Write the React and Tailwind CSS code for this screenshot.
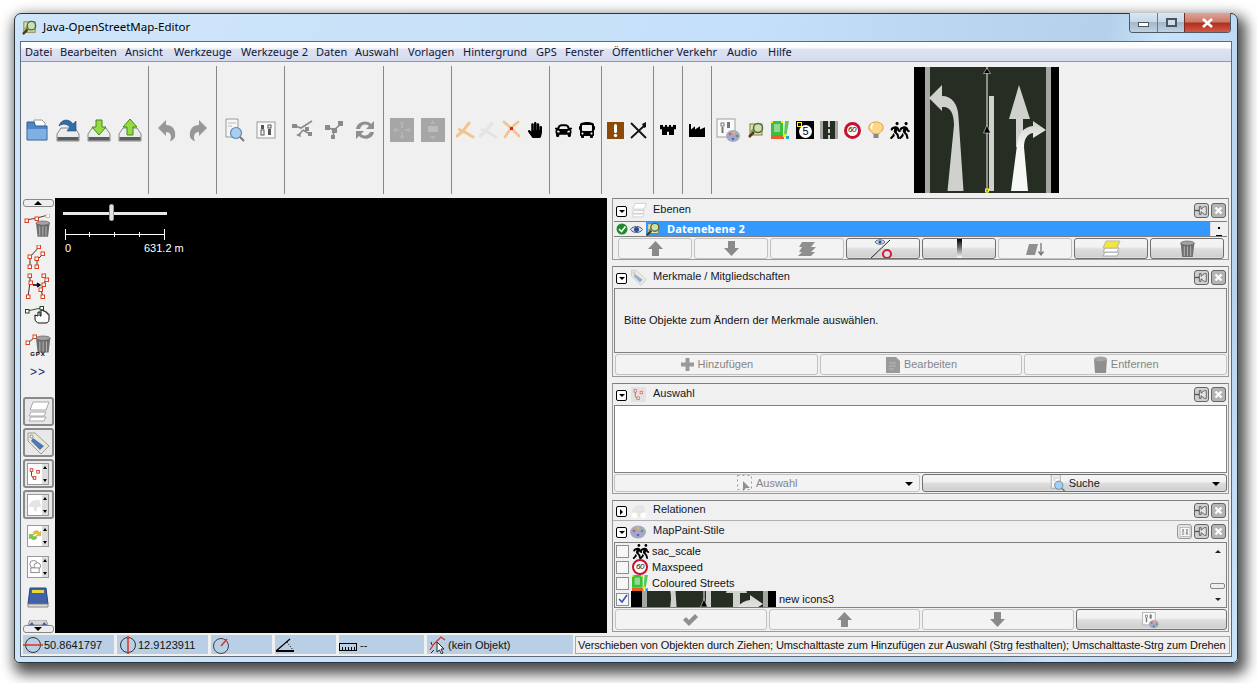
import React from "react";
import { FaCar, FaBus, FaHandPaper, FaWalking } from "react-icons/fa";

const Road = ({ w = 145, h = 126, vb = "0 0 145 126", id = "a" }) => (
  <svg width={w} height={h} viewBox={vb} preserveAspectRatio="none" className="block shrink-0">
    <defs>
      <linearGradient id={id} x1="0" y1="0" x2="0" y2="1">
        <stop offset="0" stopColor="#cfd1cd" />
        <stop offset="0.35" stopColor="#f7f7f5" />
      </linearGradient>
    </defs>
    <rect width="145" height="126" fill="#000" />
    <rect x="11" width="126" height="126" fill="#262d22" />
    <rect x="11" width="5" height="126" fill="#a5a8a2" />
    <rect x="132" width="5" height="126" fill="#a5a8a2" />
    <rect x="72" width="2" height="126" fill="#8c8f88" />
    <rect x="75" y="29" width="5" height="95" fill="#cfd1cd" />
    <path d="M15 31L28 18V29C38 29 44 37 44.5 50L49.5 124H33.5L40 58C40 46 36 39 28 40V44Z" fill="#cfd1cd" />
    <path d="M105 18L116 52H109V80H102V52H95Z" fill="#cfd1cd" />
    <path d="M97 124L103 78C104 66 110 60 119 59V54L132 63L119 71V66C113 67 110 72 110 80L114 124Z" fill={`url(#${id})`} />
    <path d="M73 1L76.5 6.5H69.5Z" fill="#000" stroke="#ddd" strokeWidth=".6" />
    <path d="M73 58L76.5 66H69.5Z" fill="#000" stroke="#ddd" strokeWidth=".6" />
    <rect x="71.5" y="122" width="3" height="3" fill="none" stroke="#ffff00" />
  </svg>
);

const S = ({ s = 22, v = 22, children }) => (
  <svg width={s} height={s} viewBox={`0 0 ${v} ${v}`} className="block shrink-0">{children}</svg>
);

const Drive = ({ children }) => (
  <S s={24} v={24}>
    <path d="M5 10H19L23 16V23H1V16Z" fill="#ececec" stroke="#8a8a8a" />
    <rect x="1.5" y="19" width="21" height="3.500" fill="#5a5d5f" />
    {children}
  </S>
);
const IOpen = () => (
  <S s={24} v={24}>
    <path d="M9 2H17L20 5V14H9Z" fill="#fff" stroke="#999" />
    <path d="M2 4H9L10.500 8H22V22H2Z" fill="#4f86c8" stroke="#2c5c96" />
    <path d="M2.500 11H21.500V21.500H2.500Z" fill="#7fb0e4" />
  </S>
);
const ISave = () => (
  <Drive>
    <path d="M3 8C5 1 13 0 17 6L20 3V13H11L14 9C11 6 7 5 3 8Z" fill="#2f6fa9" stroke="#1c4a78" strokeWidth=".6" />
  </Drive>
);
const IDown = () => (
  <Drive><path d="M9 2H15V9H19L12 17L5 9H9Z" fill="#98da44" stroke="#3f8a14" /></Drive>
);
const IUp = () => (
  <Drive><path d="M9 17H15V9H19L12 1L5 9H9Z" fill="#98da44" stroke="#3f8a14" /></Drive>
);
const IUndo = ({ flip }) => (
  <S s={24} v={24}>
    <g transform={flip ? "translate(24 0) scale(-1 1)" : undefined}>
      <path d="M3 10L11 2V7C18 7 21 12 20 19C19 21 17 23 15 23C17 19 16 14 11 14V18Z" fill="#979797" />
    </g>
  </S>
);
const ISearch = ({ s = 24 }) => (
  <S s={s} v={24}>
    <path d="M3 1H15V19H3Z" fill="#f6f6f6" stroke="#9a9a9a" />
    <path d="M5 5H13M5 8H9" stroke="#bbb" />
    <circle cx="13" cy="15" r="5.500" fill="#a9cdf0" stroke="#5e87ad" strokeWidth="1.200" />
    <path d="M17 19L21 23" stroke="#777" strokeWidth="2" />
  </S>
);
const IPrefs = ({ s = 22, c = "#555" }) => (
  <S s={s} v={22}>
    <rect x="2" y="3" width="18" height="16" fill="#fafafa" stroke="#9a9a9a" />
    <rect x="6" y="6" width="3" height="4" fill={c} />
    <rect x="6" y="11" width="3" height="5" fill="none" stroke={c} />
    <rect x="13" y="6" width="3" height="3" fill="none" stroke={c} />
    <rect x="13" y="10" width="3" height="6" fill={c} />
  </S>
);
const ISplit = () => (
  <S s={24} v={24}>
    <path d="M2 7L10 10L21 3M12 12L7 18M12 12L17 15" stroke="#8a8a8a" strokeWidth="1.600" fill="none" />
    <path d="M1 6H6V10H1ZM14 9H18V13H14ZM17 14H21V18H17ZM5 17L9 15L10 19Z" fill="#8a8a8a" />
  </S>
);
const ICombine = () => (
  <S s={24} v={24}>
    <path d="M5 9L12 12L20 5M12 12L11 19" stroke="#8a8a8a" strokeWidth="1.600" fill="none" />
    <path d="M3 7H8V12H3ZM10 10H15V15H10ZM9 17H13V21H9ZM16 3H21V8H16Z" fill="#8a8a8a" />
  </S>
);
const IRefresh = () => (
  <S s={24} v={24}>
    <path d="M3 11C4 4 13 1 18 6L21 3V11H13L16 8C12 5 8 7 7 11Z" fill="#8f8f8f" />
    <path d="M21 14C20 21 11 23 6 18L3 21V13H11L8 16C12 19 16 17 17 14Z" fill="#8f8f8f" />
  </S>
);
const IMove = () => (
  <S s={24} v={24}>
    <rect width="24" height="24" fill="#a6a6a6" />
    <path d="M12 3L15 6H13V10H11V6H9ZM12 21L9 18H11V14H13V18H15ZM3 12L6 9V11H9V13H6V15ZM21 12L18 15V13H15V11H18V9Z" fill="#b4b4b4" />
  </S>
);
const IPrint = () => (
  <S s={24} v={24}>
    <rect width="24" height="24" fill="#a6a6a6" />
    <rect x="7" y="8" width="10" height="6" fill="#bcbcbc" />
    <path d="M12 2L15 6H9ZM12 22L9 18H15Z" fill="#b4b4b4" />
  </S>
);
const ICross = ({ o = 1, c = "#f2c590", dot }) => (
  <S s={20} v={20}>
    <g opacity={o}>
      <path d="M1 16L7 11M7 11L13 3M7 11L17 17" stroke={c} strokeWidth="3" fill="none" strokeLinecap="round" />
      <path d="M2 9L7 11" stroke={c} strokeWidth="2.500" />
    </g>
    {dot && <rect x="8" y="8" width="3" height="3" fill="#e8201c" />}
  </S>
);
const ICross2 = () => (
  <S s={20} v={20}>
    <path d="M2 2L9 8L16 2M9 8L3 17M9 8L17 16" stroke="#f2c590" strokeWidth="2.800" fill="none" strokeLinecap="round" />
    <rect x="8" y="7" width="3" height="3" fill="#e8201c" />
  </S>
);
const IWarn = () => (
  <S s={17} v={17}>
    <rect width="17" height="17" fill="#8b4a08" />
    <rect x="7" y="2" width="3" height="9" rx="1.500" fill="#fff" />
    <circle cx="8.500" cy="13.500" r="1.700" fill="#fff" />
  </S>
);
const IFood = () => (
  <S s={17} v={17}>
    <path d="M1 1L16 16M15 3L1 16" stroke="#111" strokeWidth="1.800" />
    <path d="M12 2L16 0L16 5L14 6Z" fill="#111" />
  </S>
);
const ICastle = () => (
  <svg width="16" height="10" viewBox="0 0 16 12" preserveAspectRatio="none" className="block">
    <path d="M0 0H3V2H5V0H7V2H9V0H11V2H13V0H16V5H14V12H9V8H7V12H2V5H0Z" fill="#000" />
  </svg>
);
const IFactory = () => (
  <svg width="16" height="13" viewBox="0 0 16 12" preserveAspectRatio="none" className="block">
    <path d="M0 0H2V5L6 2V5L11 2V5L16 3V12H0Z" fill="#000" />
  </svg>
);
const IPalette = ({ s = 26 }) => (
  <S s={s} v={26}>
    <rect x="1" y="2" width="18" height="18" fill="#fafafa" stroke="#a0a0a0" />
    <rect x="5" y="6" width="3" height="3" fill="none" stroke="#777" />
    <rect x="5.500" y="10" width="2" height="6" fill="#777" />
    <rect x="11" y="5" width="3" height="6" fill="#777" />
    <ellipse cx="17" cy="19" rx="7" ry="6" fill="#a7a7c9" />
    <circle cx="14" cy="17" r="1.300" fill="#d9534f" />
    <circle cx="18" cy="15.500" r="1.300" fill="#e0c040" />
    <circle cx="21" cy="19" r="1.300" fill="#5aa050" />
    <circle cx="17" cy="22" r="1.300" fill="#4a70c8" />
  </S>
);
const ILogo = ({ s = 17 }) => (
  <S s={s} v={17}>
    <rect x="2" y="2" width="12" height="11" fill="#dfe4b0" stroke="#8a7c3a" />
    <path d="M3 10L8 5L13 3" stroke="#7ea85a" strokeWidth="2" fill="none" />
    <circle cx="10" cy="6" r="4.500" fill="#c9e0b0" stroke="#55663a" strokeWidth="1.500" />
    <path d="M6 10L1 15" stroke="#4a3a20" strokeWidth="2.500" />
  </S>
);
const IStreets = ({ s = 18, h = 18 }) => (
  <svg width={s} height={h} viewBox="0 0 18 18" className="block shrink-0">
    <rect width="18" height="18" fill="#f0f0f0" />
    <rect x="0" y="0" width="12" height="14" fill="#37c337" />
    <rect x="3" y="3" width="6" height="8" fill="#97d597" />
    <rect x="0" y="0" width="2" height="2" fill="#f0f000" />
    <rect x="10" y="0" width="2" height="2" fill="#f0f000" />
    <path d="M14 0H18L15.500 14H13Z" fill="#5cc85c" />
    <rect x="0" y="14" width="13" height="4" fill="#e8602c" />
    <rect x="12" y="13" width="3" height="3" fill="#f0f000" />
    <rect x="15" y="15" width="3" height="3" fill="#20a0e0" />
  </svg>
);
const IFive = () => (
  <div className="relative w-[18px] h-[18px] bg-black flex items-center justify-center">
    <div className="w-[13px] h-[13px] mt-[2px] ml-[2px] rounded-full bg-white text-black text-[11px] leading-[13px] text-center">5</div>
    <div className="absolute left-[1px] top-[1px] w-[5px] h-[5px] border border-[#ffff00]" />
  </div>
);
const ILanes = () => (
  <svg width="18" height="18" viewBox="0 0 18 18" className="block">
    <rect width="18" height="18" fill="#262d22" />
    <path d="M0 0H3V18H0ZM15 0H18V18H15Z" fill="#a5a8a2" />
    <path d="M8 0H10V6H8ZM8 8H10V12H8ZM8 14H10V18H8Z" fill="#cfd1cd" />
  </svg>
);
const ISixty = ({ s = 17 }) => (
  <div className={s === 17 ? "w-[17px] h-[17px] rounded-full border-[3px] border-[#c8102e] bg-white flex items-center justify-center text-[8px] leading-none text-black italic tracking-[-0.5px]" : "w-[16px] h-[16px] rounded-full border-[2px] border-[#c8102e] bg-white flex items-center justify-center text-[8px] leading-none text-black italic tracking-[-0.5px]"}>60</div>
);
const ILamp = () => (
  <S s={18} v={18}>
    <path d="M9 1C4 1 1 4 2 8C3 11 6 11 6 13H12C12 11 15 11 16 8C17 4 14 1 9 1Z" fill="#fcd68a" stroke="#e0a030" />
    <path d="M6 3C4 4 4 6 5 8" stroke="#fff" strokeWidth="1.500" fill="none" />
    <rect x="6.500" y="13" width="5" height="4" fill="#888" />
  </S>
);
const IHikers = ({ s = 17 }) => (
  <div className="flex items-center">
    <FaWalking size={s} color="#000" />
    <FaWalking size={s} color="#000" className="-ml-[8px]" />
  </div>
);

const Nd = ({ x, y, c = "#e0401c", r = 3.500 }) => <rect x={x} y={y} width={r} height={r} fill="#fff" stroke={c} strokeWidth="1" />;
const Trash = ({ x = 0, y = 0, s = 1, c = "#6f6f6f" }) => (
  <g transform={`translate(${x} ${y}) scale(${s})`}>
    <path d="M0 2H13L11.500 15H1.500Z" fill={c} />
    <path d="M3.500 5V14M6.500 5V14M9.500 5V14" stroke="#b0b0b0" />
    <ellipse cx="6.500" cy="2" rx="6.500" ry="2" fill="#a4a4a4" stroke="#555" strokeWidth=".6" />
  </g>
);
const TDel = () => (
  <svg width="28" height="24" viewBox="0 0 28 24" className="block">
    <path d="M2 6L13 4L24 1" stroke="#444" fill="none" />
    <Nd x="1" y="5" /><Nd x="11" y="3" /><Nd x="22" y="0" c="#f0b0a0" />
    <Trash x="12" y="7" s="1.050" />
  </svg>
);
const TSplit = () => (
  <svg width="22" height="24" viewBox="0 0 22 24" className="block">
    <path d="M3 22V12L12 2M10 22V15L16 9" stroke="#333" fill="none" />
    <Nd x="1" y="20" /><Nd x="1" y="10" /><Nd x="10" y="0" /><Nd x="8" y="20" /><Nd x="8" y="12" /><Nd x="14" y="7" />
  </svg>
);
const TMerge = () => (
  <svg width="24" height="27" viewBox="0 0 24 27" className="block">
    <path d="M4 2L4 9L2 24M18 2L20 6L18 11L15 17L17 24" stroke="#333" fill="none" />
    <path d="M7 12H13M11 10L14 12L11 14" stroke="#000" strokeWidth="1.400" fill="none" />
    <Nd x="2" y="1" /><Nd x="3" y="8" /><Nd x="0.500" y="22" /><Nd x="16" y="1" /><Nd x="19" y="5" /><Nd x="16" y="10" /><Nd x="13" y="15" /><Nd x="15" y="22" />
  </svg>
);
const THand = () => (
  <svg width="26" height="18" viewBox="0 0 26 18" className="block">
    <path d="M2 5L16 2" stroke="#444" />
    <Nd x="0.500" y="3.500" c="#1a4a1a" /><Nd x="15" y="0.500" c="#1a4a1a" />
    <path d="M13 6V10L10 9V13C10 15 12 17 14 17H21C23 17 24 15 24 13V8H22V6H20V5H18V4H16V10H15V6Z" fill="#fafafa" stroke="#111" />
  </svg>
);
const TGpx = () => (
  <div className="flex flex-col items-center -space-y-[3px]">
    <svg width="26" height="20" viewBox="0 0 26 20" className="block">
      <path d="M3 9L10 3" stroke="#333" />
      <Nd x="1" y="7" /><Nd x="8" y="1" />
      <Trash x="11" y="2" s="1.100" />
    </svg>
    <span className="text-[6px] leading-[7px] font-bold tracking-[1px] text-black">GPX</span>
  </div>
);
const Stack = ({ top = "#fff", line = "#a8a8a8", s = 24 }) => (
  <svg width={s} height={s} viewBox="0 0 24 24" className="block shrink-0">
    <path d="M5 17H20L22 13H7Z" fill="#fff" stroke={line} transform="translate(-2 4)" />
    <path d="M5 13H20L22 9H7Z" fill="#fff" stroke={line} transform="translate(-2 3)" />
    <path d="M4 10L7 2H23L20 10Z" fill={top} stroke={line} />
  </svg>
);
const Tag = ({ s = 24, o = 1 }) => (
  <svg width={s} height={s} viewBox="0 0 24 24" className="block shrink-0" opacity={o}>
    <path d="M2 2L9 2L23 15L15 23L2 10Z" fill="#e8e8d8" stroke="#a0a090" />
    <circle cx="5.500" cy="5.500" r="1.500" fill="#fff" stroke="#888" />
    <path d="M7 7L18 15L14 19L5 10Z" fill="#4f77b5" />
  </svg>
);
const Panelette = ({ children }) => (
  <div className="flex items-stretch w-[22px] h-[22px] bg-white border border-[#999]">
    <div className="flex-1 flex items-center justify-center overflow-hidden">{children}</div>
    <div className="w-[6px] bg-[#ddd] flex flex-col justify-between items-center">
      <div className="w-0 h-0 mt-[2px] border-x-[2px] border-x-transparent border-b-[3px] border-b-black" />
      <div className="w-0 h-0 mb-[2px] border-x-[2px] border-x-transparent border-t-[3px] border-t-black" />
    </div>
  </div>
);
const SelGlyph = ({ s = 16, o = 1 }) => (
  <svg width={s} height={s} viewBox="0 0 16 16" className="block" opacity={o}>
    <path d="M4 3V10L7 14" stroke="#333" fill="none" />
    <rect x="2.500" y="2" width="3" height="3" fill="#fff" stroke="#d83010" />
    <rect x="10" y="4" width="3" height="3" fill="#fff" stroke="#d83010" />
    <rect x="6" y="11" width="3" height="3" fill="#fff" stroke="#d83010" />
  </svg>
);
const RelGlyph = ({ s = 16 }) => (
  <svg width={s} height={s} viewBox="0 0 16 16" className="block">
    <path d="M1 8L5 3L13 2L15 9L11 15H3Z" fill="#e4e4e4" />
    <circle cx="4" cy="13" r="3" fill="#fff" /><circle cx="13" cy="13" r="3" fill="#fff" />
  </svg>
);
const SyncGlyph = () => (
  <svg width="22" height="19" viewBox="0 0 22 19" className="block">
    <path d="M8 5C10 1 16 1 18 5L20 3V10H13L15 8C14 6 11 6 10 8Z" fill="#e8c430" stroke="#a08810" strokeWidth=".6" />
    <path d="M14 13C12 17 6 17 4 13L2 15V8H9L7 10C8 12 11 12 12 10Z" fill="#7ccc44" stroke="#3f8a14" strokeWidth=".6" />
  </svg>
);

const Sep = () => (
  <div className="w-[6px] pl-[3px] self-stretch py-[4px] shrink-0"><div className="w-px h-full bg-[#888]" /></div>
);
const B = ({ children }) => <div className="w-[31px] shrink-0 flex items-center justify-center">{children}</div>;
const N = ({ children }) => <div className="w-[23px] shrink-0 flex items-center justify-center">{children}</div>;

const menus = [
  ["Datei", "w-[35px]"], ["Bearbeiten", "w-[65px]"], ["Ansicht", "w-[49px]"], ["Werkzeuge", "w-[67px]"],
  ["Werkzeuge 2", "w-[75px]"], ["Daten", "w-[39px]"], ["Auswahl", "w-[53px]"], ["Vorlagen", "w-[55px]"],
  ["Hintergrund", "w-[73px]"], ["GPS", "w-[29px]"], ["Fenster", "w-[47px]"], ["Öffentlicher Verkehr", "w-[115px]"],
  ["Audio", "w-[41px]"], ["Hilfe", "w-[30px]"],
];

const Tog = ({ open = true }) => (
  <div className="w-[11px] h-[11px] mt-[2px] rounded-[2px] border border-black bg-white flex items-center justify-center shrink-0">
    {open
      ? <div className="w-0 h-0 border-x-[3px] border-x-transparent border-t-[3px] border-t-black" />
      : <div className="w-0 h-0 border-y-[3px] border-y-transparent border-l-[3px] border-l-black" />}
  </div>
);
const Pin = () => (
  <div className="w-[15px] h-[15px] rounded-[3px] border border-[#666] bg-[#cfcfcf] flex items-center justify-center">
    <svg width="15" height="13" viewBox="0 0 15 13" className="block">
      <path d="M0 6.500H6" stroke="#555" strokeWidth="1.500" />
      <path d="M5 2H7V5L11 2H13V11H11L7 8V11H5Z" fill="#e4e4e4" stroke="#555" />
    </svg>
  </div>
);
const Cls = () => (
  <div className="w-[15px] h-[15px] rounded-[3px] border border-[#666] bg-[#b4b4b4] flex items-center justify-center">
    <svg width="9" height="9" viewBox="0 0 9 9" className="block"><path d="M1.500 1.500L7.500 7.500M7.500 1.500L1.500 7.500" stroke="#fff" strokeWidth="2.200" /></svg>
  </div>
);
const Head = ({ icon, title, open, h, extra }) => (
  <div className={`${h} flex items-center pl-[3px] pr-[2px] shrink-0`}>
    <Tog open={open} />
    <div className="w-[17px] h-[17px] ml-[3px] flex items-center justify-center shrink-0">{icon}</div>
    <span className="ml-[6px] mb-[3px] flex-1 text-[#101828]">{title}</span>
    {extra}
    <div className="flex gap-[2px]"><Pin /><Cls /></div>
  </div>
);
const on = "flex-1 flex items-center justify-center gap-[2px] rounded-[3px] border border-[#707070] bg-[linear-gradient(#f5f5f5_0%,#f1f1f1_42%,#dedede_52%,#d0d0d0_92%,#e4e4e4_100%)] text-[#101828] overflow-hidden";
const off = "flex-1 flex items-center justify-center gap-[2px] rounded-[3px] border border-[#c2c2c2] bg-[#f3f3f3] text-[#858585] overflow-hidden";

const Arrow = ({ up }) => (
  <svg width="17" height="17" viewBox="0 0 17 17" className="block">
    <path d={up ? "M8.500 1L16 9H12V16H5V9H1Z" : "M8.500 16L16 8H12V1H5V8H1Z"} fill="#8a8a8a" />
  </svg>
);

const Sec = ({ className, children }) => (
  <div className={`${className} shrink-0 flex flex-col border border-[#9a9a9a] border-t-[#7f7f7f] bg-[#f0f0f0]`}>{children}</div>
);
const Check = ({ checked }) => (
  <div className="w-[13px] h-[13px] border border-[#8e8f8f] bg-[#f6f6f6] flex items-center justify-center shrink-0">
    {checked && <svg width="10" height="10" viewBox="0 0 10 10" className="block"><path d="M1 5L4 8L9 1" stroke="#3a55b0" strokeWidth="1.600" fill="none" /></svg>}
  </div>
);

const Cell = ({ w, children }) => (
  <div className={`${w} h-[19px] bg-[#b8cfe5] flex items-center shrink-0`}>{children}</div>
);

export default function App() {
  return (
    <div className="w-[1257px] h-[683px] bg-white overflow-hidden pt-[13px] pl-[14px] font-['Liberation_Sans',sans-serif] text-[11px] leading-[14px] text-[#111]">
      <div className="w-[1224px] h-[650px] rounded-t-[7px] rounded-b-[5px] border border-[#2c343c] flex flex-col shadow-[4px_7px_14px_4px_rgba(0,0,0,0.7)] bg-[linear-gradient(100deg,#cfe5f9_0%,#c5e0f9_55%,#bad6ef_72%,#b5d1ea_82%,#c8e3fa_86%,#b8d4ed_95%,#cbe5fb_100%)]">
        <div className="h-[27px] shrink-0 flex items-center pl-[7px] relative">
          <ILogo s={16} />
          <span className="ml-[5px] mb-[2px] font-['Noto_Sans',sans-serif] text-[11.5px] text-black">Java-OpenStreetMap-Editor</span>
          <div className="absolute right-[6px] top-[-1px] h-[20px] w-[102px] flex rounded-b-[4px] border border-t-0 border-[#4c5a68] overflow-hidden">
            <div className="w-[28px] border-r border-[#6b7a88] flex items-center justify-center bg-[linear-gradient(#dbe7f3_0%,#c8d8e8_45%,#a4b8ca_50%,#c0d2e2_100%)]">
              <div className="w-[11px] h-[5px] mt-[3px] bg-white border border-[#4a5560]" />
            </div>
            <div className="w-[27px] border-r border-[#7a2a20] flex items-center justify-center bg-[linear-gradient(#dbe7f3_0%,#c8d8e8_45%,#a4b8ca_50%,#c0d2e2_100%)]">
              <div className="w-[11px] h-[9px] border-2 border-[#4a5560] bg-[#d0dde9]" />
            </div>
            <div className="flex-1 flex items-center justify-center bg-[linear-gradient(#e0a598_0%,#cc7a6b_45%,#b3301f_55%,#d05a48_100%)]">
              <svg width="13" height="10" viewBox="0 0 13 10" className="block"><path d="M2 1L11 9M11 1L2 9" stroke="#fff" strokeWidth="2.600" /></svg>
            </div>
          </div>
        </div>

        <div className="mx-[5px] mb-[5px] flex-1 min-h-0 flex flex-col border border-[#5e6c7a] bg-[#f0f0f0]">
          <div className="h-[20px] shrink-0 flex items-center pl-[4px] border-b border-[#999] bg-[linear-gradient(#ffffff_0%,#fbfbfe_30%,#dde2f2_40%,#d5dbee_100%)] font-['Noto_Sans',sans-serif] text-[#101838]">
            {menus.map(([m, w]) => <span key={m} className={`${w} shrink-0 whitespace-nowrap`}>{m}</span>)}
          </div>

          <div className="h-[136px] shrink-0 flex items-center py-[0px]">
            <B><IOpen /></B><B><ISave /></B><B><IDown /></B><B><IUp /></B><Sep />
            <B><IUndo /></B><B><IUndo flip /></B><Sep />
            <B><ISearch /></B><B><IPrefs /></B><Sep />
            <B><ISplit /></B><B><ICombine /></B><B><IRefresh /></B><Sep />
            <B><IMove /></B><B><IPrint /></B><Sep />
            <N><ICross /></N><N><ICross o={0.35} c="#cfcfcf" /></N><N><ICross2 /></N><N><FaHandPaper size={16} color="#000" /></N><Sep />
            <N><FaCar size={17} color="#000" /></N><N><FaBus size={16} color="#000" /></N><Sep />
            <N><IWarn /></N><N><IFood /></N><Sep />
            <N><ICastle /></N><Sep />
            <N><IFactory /></N><Sep />
            <div className="w-[30px] shrink-0 flex justify-center"><IPalette /></div>
            <div className="w-[24px] shrink-0 flex justify-center"><ILogo s={17} /></div>
            <N><IStreets /></N>
            <div className="w-[27px] shrink-0 flex justify-center"><IFive /></div>
            <div className="w-[22px] shrink-0 flex justify-center"><ILanes /></div>
            <div className="w-[24px] shrink-0 flex justify-center"><ISixty /></div>
            <div className="w-[24px] shrink-0 flex justify-center"><ILamp /></div>
            <div className="w-[24px] shrink-0 flex justify-center"><IHikers /></div>
            <div className="ml-[2px]"><Road id="big" /></div>
          </div>

          <div className="h-[435px] shrink-0 flex">
            <div className="w-[34px] shrink-0 flex flex-col items-center">
              <div className="mt-[1px] w-[31px] h-[8px] rounded-[3px] border border-[#888] bg-[#eee] flex items-center justify-center shrink-0">
                <div className="w-0 h-0 border-x-[4px] border-x-transparent border-b-[4px] border-b-black" />
              </div>
              <div className="h-[32px] mt-[3px] flex items-center justify-center shrink-0"><TDel /></div>
              <div className="h-[29px] flex items-center justify-center shrink-0"><TSplit /></div>
              <div className="h-[30px] flex items-center justify-center shrink-0"><TMerge /></div>
              <div className="h-[27px] flex items-center justify-center shrink-0"><THand /></div>
              <div className="h-[36px] flex items-center justify-center shrink-0"><TGpx /></div>
              <div className="h-[16px] flex items-center justify-center shrink-0 text-[12px] text-[#1a2a70] tracking-[1px]">&gt;&gt;</div>

              <div className="mt-[17px] flex flex-col gap-[2px] shrink-0">
                <div className="w-[31px] h-[29px] rounded-[3px] border-2 border-[#8a8a8a] bg-[#e8e8e8] flex items-center justify-center"><Stack /></div>
                <div className="w-[31px] h-[29px] rounded-[3px] border-2 border-[#8a8a8a] bg-[#e8e8e8] flex items-center justify-center"><Tag /></div>
                <div className="w-[31px] h-[29px] rounded-[3px] border-2 border-[#8a8a8a] bg-[#e8e8e8] flex items-center justify-center"><Panelette><SelGlyph /></Panelette></div>
                <div className="w-[31px] h-[29px] rounded-[3px] border-2 border-[#8a8a8a] bg-[#e8e8e8] flex items-center justify-center"><Panelette><RelGlyph /></Panelette></div>
              </div>
              <div className="h-[31px] mt-[1px] flex items-center justify-center shrink-0"><Panelette><SyncGlyph /></Panelette></div>
              <div className="h-[31px] flex items-center justify-center shrink-0"><Panelette><svg width="15" height="15" viewBox="0 0 15 15" className="block"><circle cx="6" cy="5" r="4" fill="#fff" stroke="#888" /><circle cx="10" cy="7" r="3.500" fill="#fff" stroke="#888" /><rect x="3" y="9" width="9" height="5" fill="#fff" stroke="#888" /></svg></Panelette></div>
              <div className="h-[31px] flex items-center justify-center shrink-0">
                <svg width="22" height="21" viewBox="0 0 22 21" className="block"><path d="M3 1H19L21 17H1Z" fill="#3f62a8" stroke="#2a4478" /><rect x="5" y="3" width="12" height="3" fill="#e8d840" /><path d="M1 17H21V20H1Z" fill="#ddd" stroke="#888" /></svg>
              </div>
              <div className="flex-1 flex items-end justify-center overflow-hidden min-h-0">
                <svg width="22" height="5" viewBox="0 0 22 5" className="block"><path d="M3 0H19L21 5H1Z" fill="#d8d8d8" stroke="#999" /><path d="M2 5L5 2L7 5Z" fill="#3f62a8" /><path d="M20 5L17 2L15 5Z" fill="#3f62a8" /></svg>
              </div>
              <div className="w-[31px] h-[8px] rounded-[3px] border border-[#888] bg-[#eee] flex items-center justify-center shrink-0">
                <div className="w-0 h-0 border-x-[4px] border-x-transparent border-t-[4px] border-t-black" />
              </div>
            </div>

            <div className="w-[552px] shrink-0 bg-black relative text-white">
              <div className="absolute left-[8px] top-[14px] w-[104px] h-[3px] bg-[#e8e8e8]" />
              <div className="absolute left-[54px] top-[6px] w-[5px] h-[17px] rounded-[2px] bg-[#e4e4e4] border border-[#999]" />
              <svg width="100" height="11" viewBox="0 0 100 11" className="absolute left-[10px] top-[31px] block">
                <path d="M0.500 0V11M99.500 0V11M0 5.500H100M24.500 3V8M49.500 3V8M74.500 3V8" stroke="#fff" />
              </svg>
              <span className="absolute left-[10px] top-[43px]">0</span>
              <span className="absolute left-[89px] top-[43px] whitespace-nowrap">631.2 m</span>
            </div>
            <div className="w-[5px] shrink-0" />

            <div className="w-[617px] shrink-0 flex flex-col">
              <Sec className="h-[62px]">
                <Head h="h-[22px]" title="Ebenen" icon={<Stack s={17} line="#c4c4c4" />} />
                <div className="mx-px h-[16px] shrink-0 border-y border-[#808080] flex items-stretch">
                  <div className="w-[32px] flex items-center pl-[2px] gap-[2px] shrink-0">
                    <svg width="12" height="12" viewBox="0 0 12 12" className="block"><circle cx="6" cy="6" r="5.500" fill="#1f8a2a" /><path d="M3 6L5.500 8.500L9.500 3.500" stroke="#fff" strokeWidth="1.600" fill="none" /></svg>
                    <svg width="13" height="9" viewBox="0 0 13 9" className="block"><path d="M0.500 4.500C3 0.500 10 0.500 12.500 4.500C10 8.500 3 8.500 0.500 4.500Z" fill="#d8e0ee" stroke="#556" /><circle cx="6.500" cy="4.500" r="2.500" fill="#2a4aa0" /></svg>
                  </div>
                  <div className="flex-1 bg-[#3399ff] flex items-center">
                    <ILogo s={15} />
                    <span className="ml-[6px] font-['Noto_Sans',sans-serif] font-bold text-white text-[11px] tracking-[0.15px]">Datenebene 2</span>
                  </div>
                  <div className="w-[17px] shrink-0 bg-[#f0f0f0] border-l border-[#ddd] relative overflow-hidden">
                    <div className="absolute left-[7px] top-[5px] w-[2px] h-[2px] bg-black" />
                    <div className="absolute left-[5px] bottom-0 w-[6px] h-[1px] bg-black" />
                  </div>
                </div>
                <div className="h-[21px] mt-px pl-[5px] pr-[4px] flex gap-[2px] shrink-0">
                  <div className={off}><Arrow up /></div>
                  <div className={off}><Arrow /></div>
                  <div className={off}>
                    <svg width="20" height="16" viewBox="0 0 20 16" className="block"><path d="M5 1H18L14 6H19L14 11H18L14 15H1L5 11H2L5 6H2Z" fill="#8f8f8f" /></svg>
                  </div>
                  <div className={on}>
                    <svg width="34" height="20" viewBox="0 0 34 20" className="block">
                      <path d="M9 3C11 0 17 0 19 3C17 6 11 6 9 3Z" fill="#d8e0ee" stroke="#5c6a8a" /><circle cx="14" cy="3" r="1.600" fill="#2a4aa0" />
                      <path d="M4 20L24 1" stroke="#222" />
                      <circle cx="21" cy="15" r="4" fill="#dde" stroke="#d02030" strokeWidth="2" />
                    </svg>
                  </div>
                  <div className={on}><div className="w-[5px] h-full bg-[linear-gradient(#000,#888_55%,#fff)]" /></div>
                  <div className={off}>
                    <svg width="20" height="16" viewBox="0 0 20 16" className="block"><path d="M4 3H13L10 14H1Z" fill="#8f8f8f" /><path d="M16 2V13M13.500 10.500L16 14L18.500 10.500" stroke="#777" strokeWidth="1.300" fill="none" /></svg>
                  </div>
                  <div className={on}>
                    <svg width="20" height="17" viewBox="0 0 20 17" className="block"><path d="M2 16H16L18 12H4Z" fill="#fff" stroke="#aaa" /><path d="M2 12H16L18 8H4Z" fill="#fff" stroke="#aaa" /><path d="M2 8L5 1H19L16 8Z" fill="#f3e442" stroke="#bba" /></svg>
                  </div>
                  <div className={on}><svg width="17" height="18" viewBox="0 0 15 17" className="block"><Trash x="1" y="1" s="1" /></svg></div>
                </div>
              </Sec>

              <Sec className="h-[111px] mt-[6px]">
                <Head h="h-[21px]" title="Merkmale / Mitgliedschaften" icon={<Tag s={17} o={0.55} />} />
                <div className="mx-px h-[65px] shrink-0 border border-[#808080] flex items-center pl-[9px] pb-[2px]">Bitte Objekte zum Ändern der Merkmale auswählen.</div>
                <div className="h-[21px] mt-[1px] pl-[2px] pr-[1px] flex gap-[2px] shrink-0">
                  <div className={off}>
                    <svg width="15" height="15" viewBox="0 0 15 15" className="block"><path d="M5.500 1H9.500V5.500H14V9.500H9.500V14H5.500V9.500H1V5.500H5.500Z" fill="#9a9a9a" /></svg>
                    <span className="ml-px mb-[2px]">Hinzufügen</span>
                  </div>
                  <div className={off}>
                    <svg width="16" height="18" viewBox="0 0 16 18" className="block"><path d="M1 1H11L15 5V17H1Z" fill="#9a9a9a" /><path d="M4 7H11M4 10H11M4 13H9" stroke="#b8b8b8" /></svg>
                    <span className="ml-px mb-[2px]">Bearbeiten</span>
                  </div>
                  <div className={off}>
                    <svg width="15" height="18" viewBox="0 0 15 18" className="block"><path d="M1 3H14L13 17H2Z" fill="#8f8f8f" /><ellipse cx="7.500" cy="3" rx="6.500" ry="2.500" fill="#a4a4a4" /></svg>
                    <span className="ml-px mb-[2px]">Entfernen</span>
                  </div>
                </div>
              </Sec>

              <Sec className="h-[111px] mt-[6px]">
                <Head h="h-[21px]" title="Auswahl" icon={<div className="w-[15px] h-[15px] bg-[#e2e2e2] flex items-center justify-center"><SelGlyph s={13} o={0.65} /></div>} />
                <div className="mx-px h-[68px] shrink-0 border border-[#808080] bg-white" />
                <div className="h-[18px] mt-[1px] pl-[1px] pr-[1px] flex gap-[2px] shrink-0">
                  <div className={`${off} relative`}>
                    <svg width="18" height="18" viewBox="0 0 18 18" className="block"><rect x="1.500" y="1.500" width="14" height="14" fill="none" stroke="#999" strokeDasharray="2 3" /><path d="M7 7V17L10 14H14Z" fill="#8f8f8f" /></svg>
                    <span>Auswahl</span>
                    <div className="absolute right-[6px] top-[7px] w-0 h-0 border-x-[4px] border-x-transparent border-t-[4px] border-t-black" />
                  </div>
                  <div className={`${on} relative`}>
                    <ISearch s={18} />
                    <span>Suche</span>
                    <div className="absolute right-[6px] top-[7px] w-0 h-0 border-x-[4px] border-x-transparent border-t-[4px] border-t-black" />
                  </div>
                </div>
              </Sec>

              <Sec className="h-[132px] mt-[6px]">
                <Head h="h-[19px]" open={false} title="Relationen" icon={<RelGlyph s={15} />} />
                <Head h="h-[22px] border-t border-[#b0b0b0]" title="MapPaint-Stile"
                  icon={<svg width="17" height="15" viewBox="0 0 17 15" className="block"><ellipse cx="8" cy="8" rx="8" ry="6.500" fill="#a7a7c9" /><circle cx="4" cy="7" r="1.300" fill="#d9534f" /><circle cx="8" cy="4" r="1.300" fill="#e0c040" /><circle cx="12" cy="7" r="1.300" fill="#5aa050" /><circle cx="8" cy="11" r="1.300" fill="#4a70c8" /></svg>}
                  extra={<div className="w-[15px] h-[15px] mr-[2px] rounded-[3px] border border-[#999] bg-[#e4e4e4] flex items-center justify-center"><IPrefs s={12} c="#888" /></div>} />
                <div className="mx-px h-[66px] shrink-0 border border-[#808080] flex">
                  <div className="flex-1 flex flex-col overflow-hidden">
                    <div className="h-[16px] flex items-center pl-[1px] shrink-0"><Check /><div className="w-[20px] ml-[2px] flex justify-center shrink-0"><IHikers s={15} /></div><span className="ml-[1px]">sac_scale</span></div>
                    <div className="h-[16px] flex items-center pl-[1px] shrink-0"><Check /><div className="w-[20px] ml-[1px] flex justify-center shrink-0"><ISixty s={16} /></div><span className="ml-[2px]">Maxspeed</span></div>
                    <div className="h-[16px] flex items-center pl-[1px] shrink-0"><Check /><div className="w-[18px] ml-[2px] shrink-0"><IStreets s={18} h={16} /></div><span className="ml-[3px]">Coloured Streets</span></div>
                    <div className="h-[16px] flex items-center pl-[1px] shrink-0"><Check checked /><div className="ml-[2px] shrink-0"><Road id="small" h={16} vb="0 50 145 16" /></div><span className="ml-[3px]">new icons3</span></div>
                  </div>
                  <div className="w-[16px] shrink-0 relative">
                    <div className="absolute left-[5px] top-[7px] w-0 h-0 border-x-[3px] border-x-transparent border-b-[3px] border-b-[#222]" />
                    <div className="absolute left-0 top-[40px] w-[15px] h-[6px] rounded-[2px] border border-[#888] bg-[#eee]" />
                    <div className="absolute left-[5px] top-[55px] w-0 h-0 border-x-[3px] border-x-transparent border-t-[3px] border-t-[#222]" />
                  </div>
                </div>
                <div className="h-[21px] mt-[1px] pl-[2px] pr-[1px] flex gap-[2px] shrink-0">
                  <div className={off}><svg width="17" height="14" viewBox="0 0 17 14" className="block"><path d="M1 7L4 4L7 7L13 1L16 4L7 13Z" fill="#8f8f8f" /></svg></div>
                  <div className={off}><Arrow up /></div>
                  <div className={off}><Arrow /></div>
                  <div className={on}><IPalette s={18} /></div>
                </div>
              </Sec>
            </div>
            <div className="flex-1" />
          </div>

          <div className="flex-1 min-h-0 flex items-start pl-[2px] pt-[2px] gap-[3px]">
            <Cell w="w-[91px]">
              <svg width="20" height="18" viewBox="0 0 20 18" className="block shrink-0"><circle cx="10" cy="9" r="7.500" fill="none" stroke="#333" /><path d="M0 9H20" stroke="#e0301c" strokeWidth="1.500" /></svg>
              <span className="ml-[1px]">50.8641797</span>
            </Cell>
            <Cell w="w-[91px]">
              <svg width="18" height="18" viewBox="0 0 18 18" className="block shrink-0 ml-[2px]"><circle cx="9" cy="9" r="7.500" fill="none" stroke="#333" /><path d="M9 0V18" stroke="#e0301c" strokeWidth="1.500" /></svg>
              <span className="ml-[1px]">12.9123911</span>
            </Cell>
            <Cell w="w-[61px]">
              <svg width="18" height="18" viewBox="0 0 18 18" className="block shrink-0 ml-[1px]"><circle cx="9" cy="10" r="7.500" fill="none" stroke="#444" /><path d="M9 10L15 3" stroke="#e0301c" strokeWidth="1.500" /></svg>
            </Cell>
            <Cell w="w-[61px]">
              <svg width="20" height="16" viewBox="0 0 20 16" className="block shrink-0"><path d="M1 14L15 2" stroke="#000" strokeWidth="1.200" /><path d="M1 14H19" stroke="#000" strokeWidth="2" /><path d="M12 5L18 13" stroke="#000" strokeDasharray="1 1.500" /></svg>
            </Cell>
            <Cell w="w-[85px]">
              <svg width="18" height="8" viewBox="0 0 18 8" className="block shrink-0 mt-[4px]"><rect x="0.500" y="0.500" width="17" height="7" fill="none" stroke="#000" /><path d="M3.500 4V8M6.500 4V8M9.500 4V8M12.500 4V8M15.500 4V8" stroke="#000" /></svg>
              <span className="ml-[3px]">--</span>
            </Cell>
            <Cell w="w-[146px]">
              <svg width="18" height="18" viewBox="0 0 18 18" className="block shrink-0 ml-[2px]"><path d="M1 14L5 8L12 1L16 4" stroke="#e0301c" fill="none" strokeWidth="1.300" /><path d="M2 17L5 14M3 9L2 6" stroke="#222" /><path d="M8 6V16L10.500 14L12.500 18L14 17L12 13H15Z" fill="#fff" stroke="#222" /></svg>
              <span className="ml-[1px]">(kein Objekt)</span>
            </Cell>
            <div className="flex-1 -ml-px mr-[1px] mt-[1px] h-[18px] border border-[#a8a8a8] flex items-center pl-[2px] whitespace-nowrap overflow-hidden tracking-[-0.1px]">Verschieben von Objekten durch Ziehen; Umschalttaste zum Hinzufügen zur Auswahl (Strg festhalten); Umschalttaste-Strg zum Drehen</div>
          </div>
        </div>
      </div>
    </div>
  );
}
